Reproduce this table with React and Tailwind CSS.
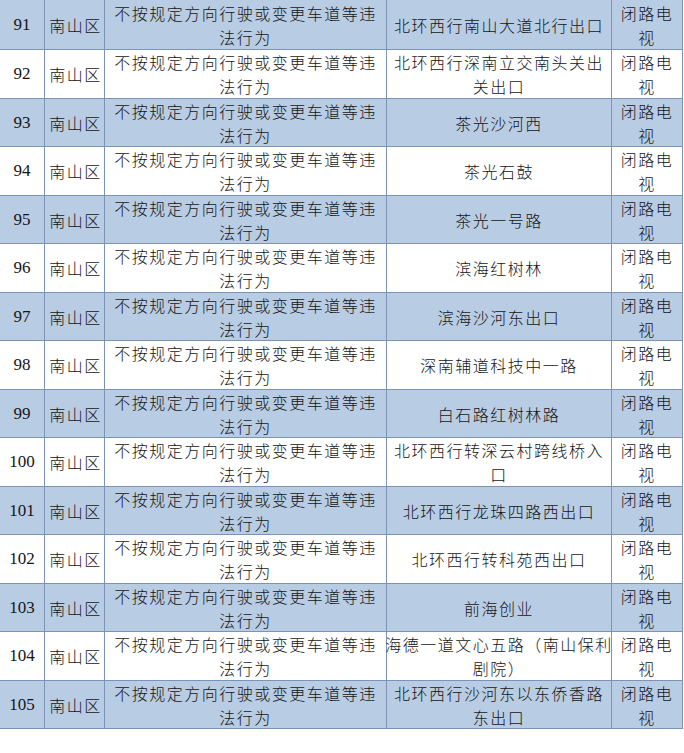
const rows = [
  ["91", ["北环西行南山大道北行出口"]],
  ["92", ["北环西行深南立交南头关出", "关出口"]],
  ["93", ["茶光沙河西"]],
  ["94", ["茶光石鼓"]],
  ["95", ["茶光一号路"]],
  ["96", ["滨海红树林"]],
  ["97", ["滨海沙河东出口"]],
  ["98", ["深南辅道科技中一路"]],
  ["99", ["白石路红树林路"]],
  ["100", ["北环西行转深云村跨线桥入", "口"]],
  ["101", ["北环西行龙珠四路西出口"]],
  ["102", ["北环西行转科苑西出口"]],
  ["103", ["前海创业"]],
  ["104", ["海德一道文心五路（南山保利", "剧院）"]],
  ["105", ["北环西行沙河东以东侨香路", "东出口"]],
];

function Lines({ lines }) {
  return (
    <div className="flex flex-col items-center leading-[24px]">
      {lines.map((l, i) => (
        <span key={i} className="whitespace-nowrap">
          {l}
        </span>
      ))}
    </div>
  );
}

export default function App() {
  return (
    <div className="w-[684px] h-[753px] bg-white text-[#151515]">
      <div className="w-[683px] flex flex-col">
        {rows.map(([num, place], i) => (
          <div
            key={num}
            className={`grid grid-cols-[45px_60px_282px_225px_71px] border-b border-[#7b93b6] ${
              i === 0 ? "h-[50px]" : "h-[48.5px]"
            } ${i % 2 === 0 ? "bg-[#b8cce4]" : "bg-white"}`}
          >
            <div className="border-r border-[#7b93b6] flex items-center justify-center font-['Liberation_Serif',serif] text-[17px]">
              {num}
            </div>
            <div className="border-r border-[#7b93b6] flex items-center justify-center pl-[2px] font-['Noto_Sans_CJK_SC',sans-serif] font-light text-[16px] tracking-[1.5px]">
              南山区
            </div>
            <div className="border-r border-[#7b93b6] flex items-center justify-center font-['Noto_Sans_CJK_SC',sans-serif] font-light text-[16px] tracking-[1.5px]">
              <Lines lines={["不按规定方向行驶或变更车道等违", "法行为"]} />
            </div>
            <div className="border-r border-[#7b93b6] flex items-center justify-center font-['Noto_Sans_CJK_SC',sans-serif] font-light text-[16px] tracking-[1.5px]">
              <Lines lines={place} />
            </div>
            <div className="border-r border-[#7b93b6] flex items-center justify-center font-['Noto_Sans_CJK_SC',sans-serif] font-light text-[16px] tracking-[1.5px]">
              <Lines lines={["闭路电", "视"]} />
            </div>
          </div>
        ))}
      </div>
    </div>
  );
}
